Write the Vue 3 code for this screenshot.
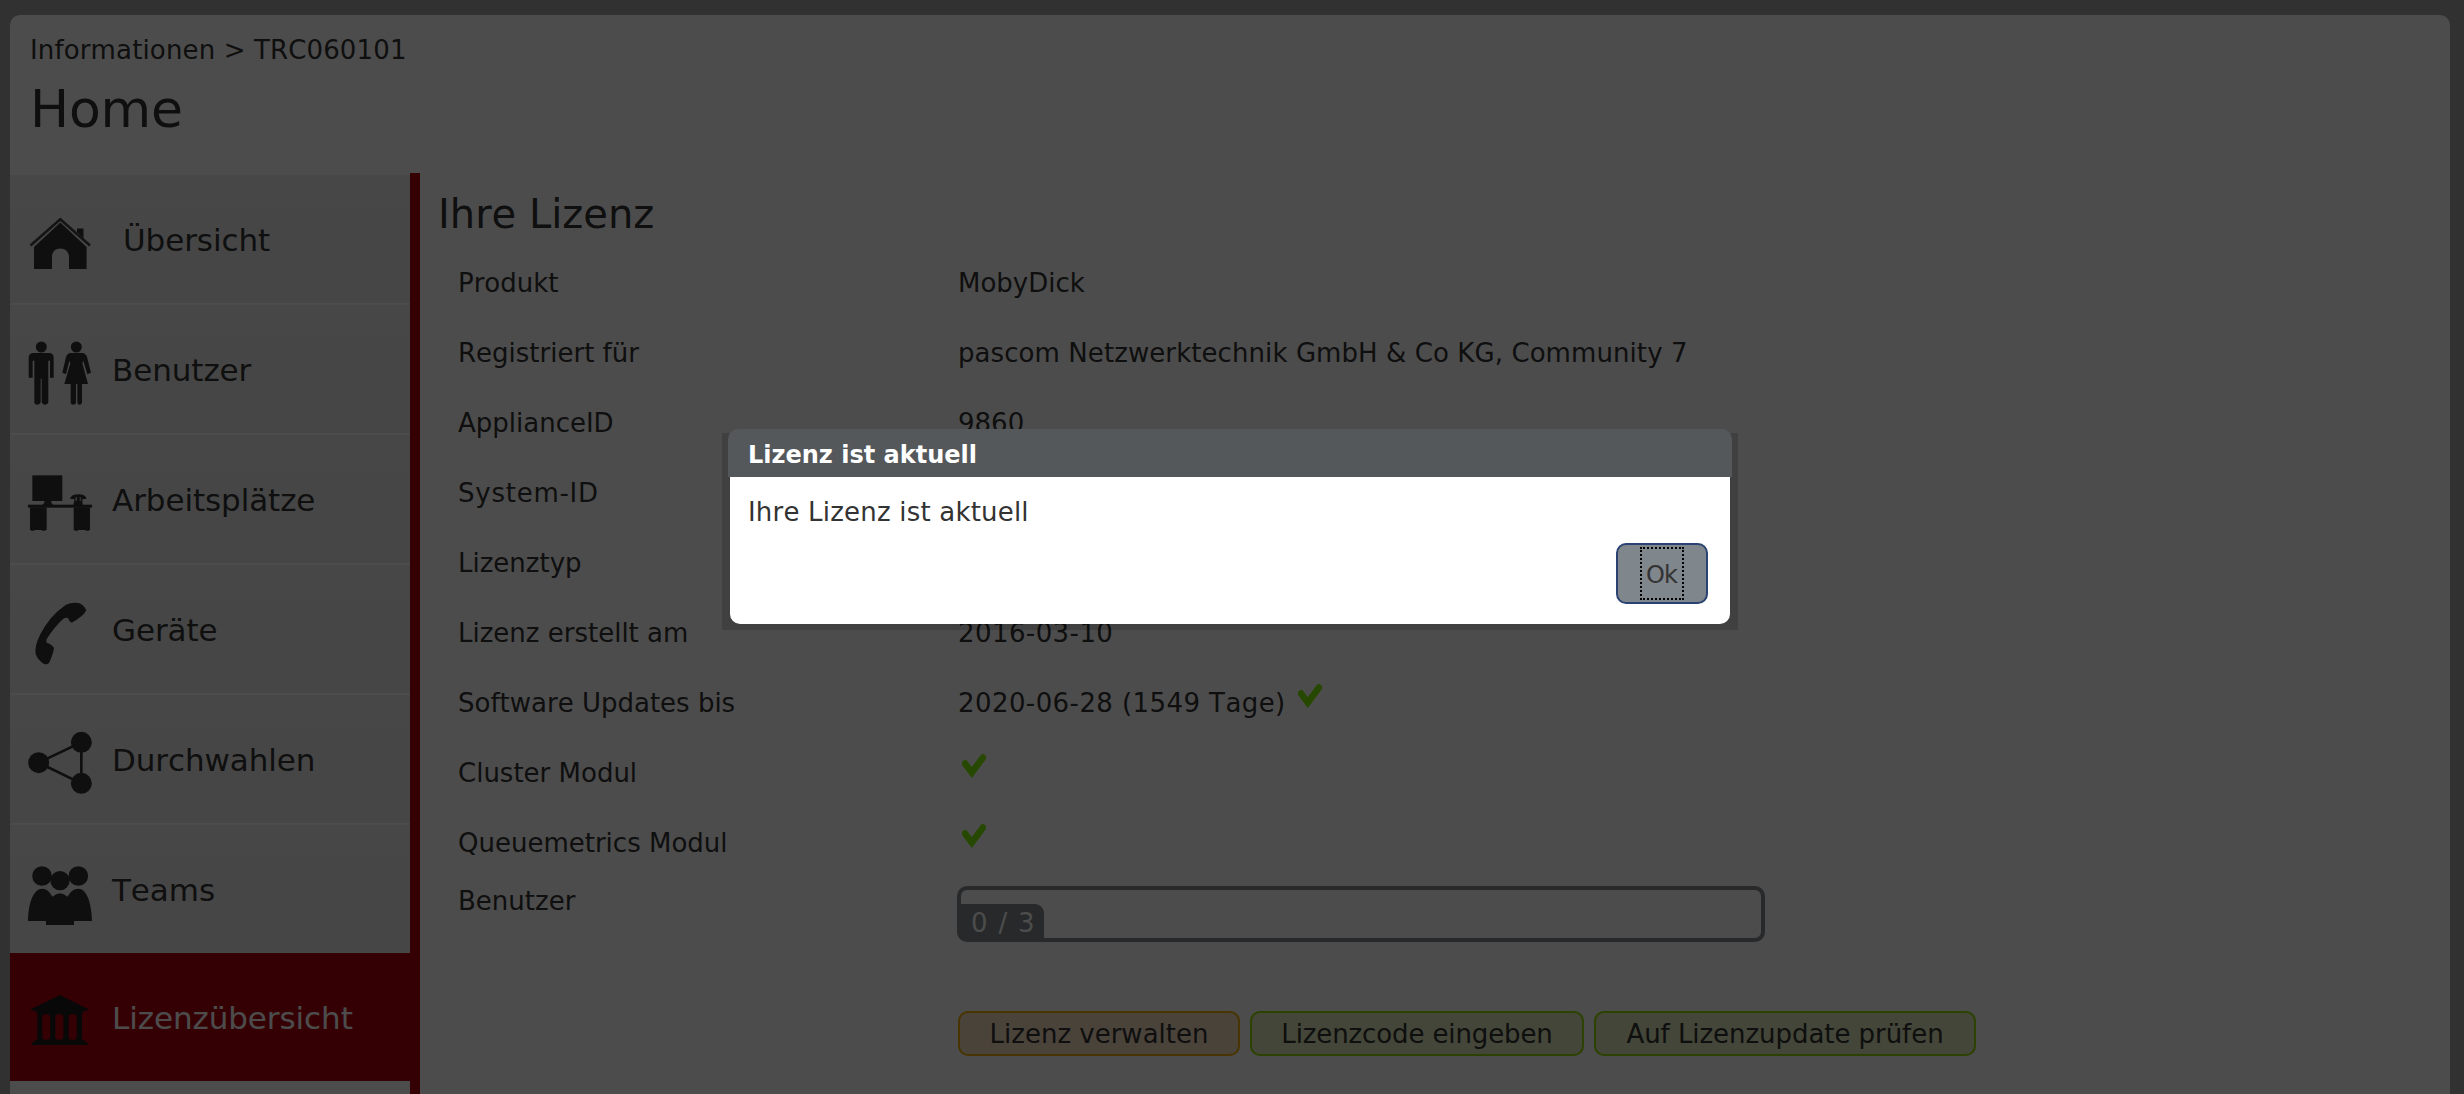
<script setup>
const menu = [
  { icon: 'home', label: 'Übersicht' },
  { icon: 'users', label: 'Benutzer' },
  { icon: 'desk', label: 'Arbeitsplätze' },
  { icon: 'phone', label: 'Geräte' },
  { icon: 'share', label: 'Durchwahlen' },
  { icon: 'teams', label: 'Teams' },
  { icon: 'bank', label: 'Lizenzübersicht', active: true },
]

const rows = [
  { label: 'Produkt', value: 'MobyDick' },
  { label: 'Registriert für', value: 'pascom Netzwerktechnik GmbH & Co KG, Community 7', kind: 'long' },
  { label: 'ApplianceID', value: '9860' },
  { label: 'System-ID', value: '', wide: true },
  { label: 'Lizenztyp', value: '' },
  { label: 'Lizenz erstellt am', value: '2016-03-10', kind: 'digits' },
  { label: 'Software Updates bis', value: '2020-06-28 (1549 Tage)', kind: 'digits', check: true },
  { label: 'Cluster Modul', value: '', check: true },
  { label: 'Queuemetrics Modul', value: '', check: true },
]
</script>

<template>
  <div class="page">
    <div class="panel">
      <header class="head">
        <div class="crumb">Informationen &gt; TRC060101</div>
        <h1>Home</h1>
      </header>
      <div class="main">
        <nav class="side">
          <div v-for="m in menu" :key="m.label" class="item" :class="{ active: m.active, first: m.icon === 'home' }">
            <svg v-if="m.icon === 'home'" class="icon" viewBox="0 0 64 64">
              <path d="M6 58V36L32.300 11.500 58.600 36V58H41V46C41 41 37.500 37.500 32.300 37.500S24 41 24 46V58Z" />
              <path d="M49 21V17.500H55.500V27.500Z" />
              <path d="M2.500 34.500 32.300 8.200 62 34.500" fill="none" stroke="#444" stroke-width="2.600" />
            </svg>
            <svg v-else-if="m.icon === 'users'" class="icon" viewBox="84 123 192 192">
              <circle cx="124" cy="141" r="16.500" />
              <path d="M98 159H150Q161 161 161 172V233H150V182H145V306Q143 314 134 314 127 314 125 307V236H122V307Q120 314 112 314 103 314 103 306V182H98V233H86V172Q86 161 98 159Z" />
              <circle cx="229" cy="141" r="16.500" />
              <path d="M211 159H247Q257 160 261 171L273 218 262 223 250 183 247 190 264 252H246V308Q244 314 239 314 232 314 232 308V252H228V308Q227 314 220 314 212 314 212 308V252H193L211 190 208 183 198 223 187 218 198 171Q202 160 211 159Z" />
            </svg>
            <svg v-else-if="m.icon === 'desk'" class="icon" viewBox="84 513 192 192">
              <rect x="97" y="526" width="90" height="77" />
              <path d="M133 602H154V608L160 615H127L133 608Z" />
              <rect x="84" y="614" width="192" height="9" />
              <rect x="90" y="622" width="50" height="68" />
              <rect x="221" y="622" width="49" height="68" />
              <path d="M93 689H103V692H93ZM126 689H136V692H126ZM224 689H234V692H224ZM257 689H267V692H257Z" />
              <path d="M210 596Q214 583 235 583 256 583 260 596L247 598V600L248 615H220L223 600V598Z" />
              <path d="M226 592H231V603H226ZM239 592H243V603H239Z" fill="#b0b0b0" />
            </svg>
            <svg v-else-if="m.icon === 'phone'" class="icon" viewBox="84 123 192 192">
              <path d="M198 134Q212 127 230 128 252 131 259 151 254 162 242 170 226 183 215 188 207 185 204 174 198 171 190 176 162 201 139 239L140 248Q155 252 162 264 160 281 147 309 140 315 131 311 113 300 107 282 103 258 121 223 149 167 198 134Z" />
            </svg>
            <svg v-else-if="m.icon === 'share'" class="icon" viewBox="84 513 192 192">
              <path d="M116 608 244 547V670Z" fill="none" stroke="#333" stroke-width="8" />
              <circle cx="116" cy="608" r="31.500" />
              <circle cx="244" cy="547" r="31.500" />
              <circle cx="244" cy="670" r="31.500" />
            </svg>
            <svg v-else-if="m.icon === 'teams'" class="icon" viewBox="84 123 192 192">
              <circle cx="126" cy="168" r="29.500" />
              <circle cx="235" cy="168" r="29.500" />
              <circle cx="180" cy="182" r="29" />
              <path d="M84 303C85 258 96 207 127 206 142 206 151 219 157 230Q169 221 180 220 191 221 203 230C209 219 218 206 235 206 264 207 275 258 276 303H222V315H138V303Z" />
            </svg>
            <svg v-else class="icon" viewBox="84 507 192 192">
              <path d="M180 525 266 568 262 572H252L246 582V657L263 670V675H95V670L112 657V582L106 572H96L92 568Z" />
              <g class="gap">
                <rect x="127" y="583" width="23" height="76" rx="9" />
                <rect x="166" y="583" width="24" height="76" rx="9" />
                <rect x="206" y="583" width="24" height="76" rx="9" />
              </g>
            </svg>
            <span class="label">{{ m.label }}</span>
          </div>
        </nav>
        <section class="content">
          <h2>Ihre Lizenz</h2>
          <div v-for="r in rows" :key="r.label" class="row">
            <div class="name" :class="{ wide: r.wide }">{{ r.label }}</div>
            <div class="value">
              <span v-if="r.value" :class="r.kind">{{ r.value }}</span>
              <svg v-if="r.check" class="check" :class="{ after: r.value }" viewBox="0 0 24 24">
                <path d="M3 9.500 9.800 18.500 21 3.500" />
              </svg>
            </div>
          </div>
          <div class="usage">
            <div class="name">Benutzer</div>
            <div class="bar"><div class="fill">0 / 3</div></div>
          </div>
          <div class="actions">
            <button class="btn orange">Lizenz verwalten</button>
            <button class="btn green code">Lizenzcode eingeben</button>
            <button class="btn green check-update">Auf Lizenzupdate prüfen</button>
          </div>
        </section>
      </div>
    </div>

    <div class="overlay"></div>
    <div class="shadow"></div>
    <div class="dialog">
      <div class="title">Lizenz ist aktuell</div>
      <div class="body">
        <div class="msg">Ihre Lizenz ist aktuell</div>
        <button class="ok"><span>Ok</span></button>
      </div>
    </div>
  </div>
</template>

<style>
body { margin: 0; overflow: hidden; }
</style>

<style scoped>
* { box-sizing: border-box; }
.page {
  position: relative;
  height: 1094px;
  overflow: hidden;
  padding: 15px 14px 0 10px;
  background: #a6a6a6;
  color: #333;
  font: 26px/30px "DejaVu Sans", Verdana, sans-serif;
  font-kerning: none;
  white-space: nowrap;
}
.panel { height: 1100px; background: #fff; border-radius: 10px 10px 0 0; }
.head { height: 158px; padding: 20px 0 0 20px; }
.crumb { letter-spacing: 0.14px; }
h1 { margin: 14px 0 0; font-size: 52px; font-weight: 400; line-height: 60px; letter-spacing: -0.2px; }
.main { display: flex; height: 942px; }
.side { width: 410px; border-right: 10px solid #b3000d; padding-top: 2px; }
.item {
  display: flex;
  height: 128px;
  margin-bottom: 2px;
  padding: 36px 0 0 18px;
  background: linear-gradient(#eee, #e9e9e9);
}
.item.active { margin-top: -2px; background: #b3000d; color: #fff; }
.icon { flex: none; width: 64px; height: 64px; fill: #333; }
.active .icon { fill: #1c1c1c; }
.active .gap { fill: #b3000d; }
.label { margin: 9px 0 0 20px; font-size: 31px; line-height: 40px; letter-spacing: -0.08px; }
.first .label { margin-left: 31px; }
.content { flex: 1; padding-left: 18px; }
h2 { margin: 0; padding-top: 21px; height: 75px; font-size: 40px; font-weight: 400; line-height: 40px; }
.row { display: flex; height: 70px; padding: 20px 0 0 20px; }
.name { width: 500px; flex: none; }
.name.wide { letter-spacing: 0.75px; }
.value { display: flex; }
.digits { letter-spacing: 0.42px; }
.long { letter-spacing: 0.08px; }
.check { width: 24px; height: 24px; margin: -4px 0 0 4px; }
.check.after { margin-left: 12px; }
.check path { fill: none; stroke: #82f200; stroke-width: 6.500; stroke-linejoin: miter; stroke-linecap: round; }
.usage { display: flex; height: 133px; padding: 8px 0 0 19px; }
.usage .name { padding-left: 1px; }
.bar {
  display: flex;
  align-items: flex-end;
  width: 808px;
  height: 56px;
  border: 4px solid #85898c;
  border-radius: 10px;
}
.fill {
  width: 83px;
  height: 34px;
  padding-left: 10px;
  border-radius: 0 9px 0 4px;
  background: #85898c;
  color: #fff;
  line-height: 38px;
  letter-spacing: 1.300px;
}
.actions { display: flex; gap: 10px; padding-left: 520px; }
.btn {
  width: 282px;
  height: 45px;
  padding: 1px 0 0;
  border: 2px solid #f2ae00;
  border-radius: 10px;
  background: #f9e0c4;
  color: #333;
  font: inherit;
  font-kerning: none;
}
.btn.green { border-color: #8fdc00; background: #e0e9bb; }
.btn.code { width: 334px; letter-spacing: -0.12px; }
.btn.check-update { width: 382px; letter-spacing: -0.05px; }
.overlay { position: absolute; inset: 0; background: rgba(0, 0, 0, 0.7); }
.shadow { position: absolute; left: 722px; top: 433px; width: 1016px; height: 197px; background: rgba(0, 0, 0, 0.15); }
.dialog { position: absolute; left: 728px; top: 429px; width: 1004px; }
.title {
  height: 48px;
  padding-left: 20px;
  border-radius: 10px 10px 0 0;
  background: #54585b;
  color: #fff;
  font-size: 24px;
  font-weight: 700;
  line-height: 52px;
}
.body {
  display: flex;
  justify-content: space-between;
  height: 147px;
  margin: 0 2px;
  padding: 0 22px 0 18px;
  border-radius: 0 0 10px 10px;
  background: #fff;
}
.msg { padding-top: 20px; letter-spacing: 0.2px; }
.ok {
  display: flex;
  justify-content: center;
  width: 92px;
  height: 61px;
  margin-top: 66px;
  padding: 2px 0 0;
  border: 2px solid #2b4372;
  border-radius: 10px;
  background: #7f868c;
  color: #333;
  font: 24px/52px "DejaVu Sans", Verdana, sans-serif;
  letter-spacing: -0.8px;
}
.ok span { width: 44px; height: 53px; border: 2px dotted #000; padding-right: 1px; text-align: center; }
</style>
